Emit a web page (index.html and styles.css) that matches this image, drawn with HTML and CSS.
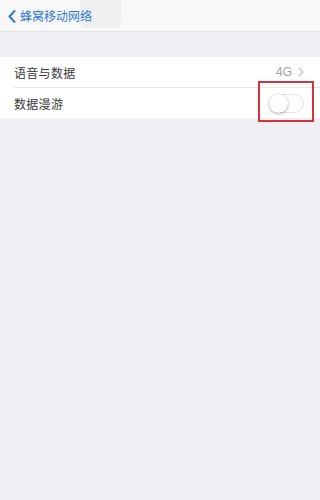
FILE: index.html
```html
<!DOCTYPE html>
<html lang="zh-CN">
<head>
<meta charset="utf-8">
<meta name="viewport" content="width=device-width, initial-scale=1">
<link rel="stylesheet" href="styles.css">
</head>
<body>
<div class="page">
  <header class="nav">
    <span class="press"></span>
    <a class="back">
      <svg class="chev" width="8" height="13" viewBox="0 0 8 13"><path d="M6.5 1 L1.5 6.5 L6.5 12" fill="none" stroke="#2e78d2" stroke-width="2" stroke-linecap="round" stroke-linejoin="round"/></svg>
      <span class="title">蜂窝移动网络</span>
    </a>
  </header>
  <div class="spacer"></div>
  <section class="group">
    <div class="row">
      <span class="label">语音与数据</span>
      <span class="detail">4G<svg class="more" width="6" height="10" viewBox="0 0 6 10"><path d="M1 1 L5 5 L1 9" fill="none" stroke="#c7c7cc" stroke-width="1.3" stroke-linecap="round" stroke-linejoin="round"/></svg></span>
    </div>
    <div class="row">
      <span class="label">数据漫游</span>
      <span class="toggle"><span class="knob"></span></span>
    </div>
  </section>
  <div class="mark"></div>
</div>
</body>
</html>
```
FILE: styles.css
```css
html, body {
  margin: 0;
  padding: 0;
  background: #efeff4;
}
body {
  font-family: "Noto Sans CJK SC", "Noto Sans", sans-serif;
  color: #333;
}
.page {
  position: relative;
  width: 100%;
  min-height: 500px;
}
.nav {
  position: relative;
  height: 31px;
  background: #f8f8f9;
  border-bottom: 1px solid #e2e2e6;
  display: flex;
  align-items: center;
}
.press {
  position: absolute;
  left: 80px;
  top: 0;
  width: 41px;
  height: 28px;
  background: #efeff1;
  border-radius: 0 0 7px 7px;
}
.back {
  position: relative;
  display: flex;
  align-items: center;
  gap: 4px;
  padding-left: 8px;
  padding-top: 1px;
}
.title {
  font-size: 12px;
  color: #2e78d2;
  letter-spacing: 0;
  line-height: 14px;
}
.spacer {
  height: 25px;
}
.group {
  background: #fff;
}
.row {
  height: 30px;
  display: flex;
  align-items: center;
  justify-content: space-between;
  margin-left: 14px;
  padding-right: 14px;
}
.row + .row {
  border-top: 1px solid #e6e6ea;
}
.label {
  font-size: 12px;
  letter-spacing: 0.3px;
  color: #3a3a3a;
}
.detail {
  display: flex;
  align-items: center;
  gap: 6px;
  font-size: 12px;
  color: #a2a2a8;
  font-family: "Liberation Sans", sans-serif;
  margin-right: 2px;
}
.toggle {
  width: 35px;
  height: 19px;
  border-radius: 10px;
  background: #fff;
  border: 1px solid #e3e3e6;
  box-sizing: border-box;
  position: relative;
  margin-right: 2px;
  margin-top: 1px;
}
.knob {
  position: absolute;
  left: -1px;
  top: -1px;
  width: 19px;
  height: 19px;
  border-radius: 50%;
  background: #fff;
  box-shadow: 0 1px 3px rgba(0,0,0,0.3), 0 0 0 0.5px rgba(0,0,0,0.08);
}
.mark {
  position: absolute;
  right: 6px;
  top: 81px;
  width: 56px;
  height: 41px;
  box-sizing: border-box;
  border: 2px solid #d4353c;
}
```
